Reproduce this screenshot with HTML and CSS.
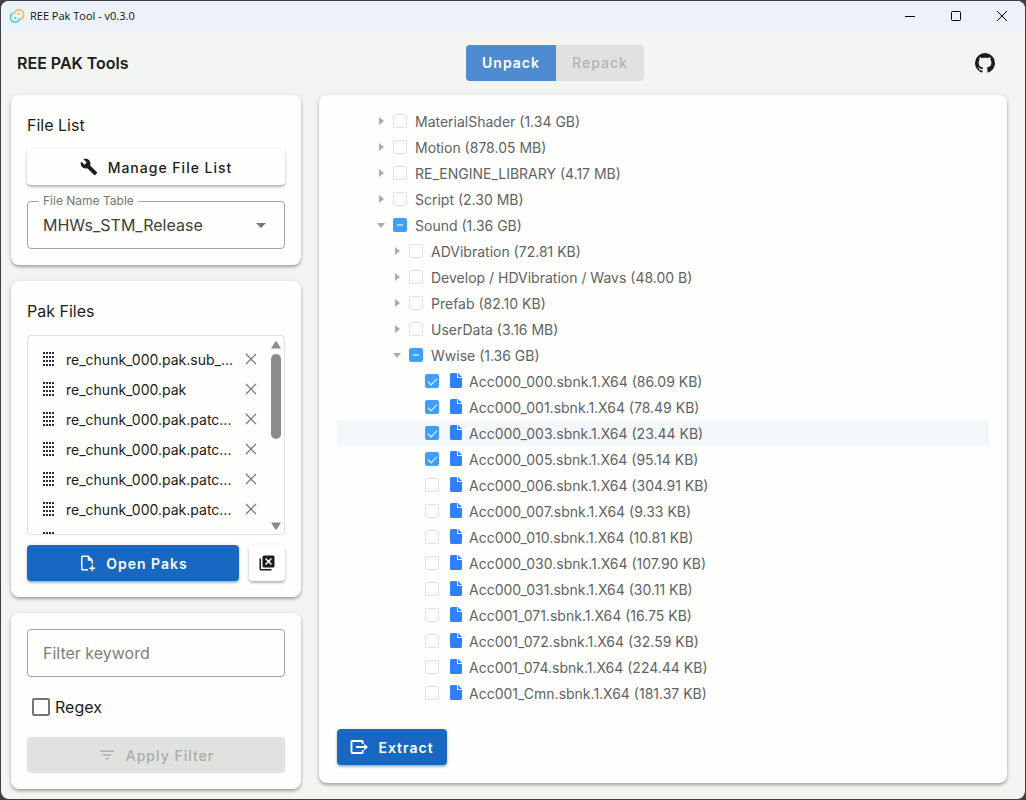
FILE: index.html
```
<!DOCTYPE html>
<html lang="en">
<head>
<meta charset="utf-8">
<meta name="viewport" content="width=device-width, initial-scale=1">
<title>REE Pak Tool - v0.3.0</title>
<link rel="stylesheet" href="styles.css">
</head>
<body>
<svg class="sprite" aria-hidden="true">
  <symbol id="i-drag" viewBox="0 0 12 14"><path d="M0 0h2v2H0zM3 0h2v2H3zM6 0h2v2H6zM9 0h2v2H9zM0 4h2v2H0zM3 4h2v2H3zM6 4h2v2H6zM9 4h2v2H9zM0 8h2v2H0zM3 8h2v2H3zM6 8h2v2H6zM9 8h2v2H9zM0 12h2v2H0zM3 12h2v2H3zM6 12h2v2H6zM9 12h2v2H9z"/></symbol>
  <symbol id="i-x" viewBox="0 0 12 12"><path d="M1 1l10 10M11 1L1 11" fill="none" stroke="currentColor" stroke-width="1.2"/></symbol>
  <symbol id="i-file" viewBox="0 0 18 18"><path d="M4.500 1H10v5h5v8.500q0 1.500-1.500 1.500h-9Q3 16 3 14.500v-12Q3 1 4.500 1z"/><path d="M11 1l4 4h-4z"/></symbol>
</svg>
<div class="window">
  <div class="titlebar">
    <svg class="app-logo" viewBox="0 0 24 24"><g fill="none" stroke-width="2.600"><path d="M8 8.500a7 7 0 1 1 9 8" stroke="#f5c060"/><path d="M16 15.500a7 7 0 1 1-9-8" stroke="#4cd0de"/></g><circle cx="14.500" cy="9" r="1.800" fill="#f5c060"/><circle cx="9.500" cy="15" r="1.800" fill="#4cd0de"/></svg>
    <span class="window-title">REE Pak Tool - v0.3.0</span>
    <button class="win-btn" aria-label="Minimize"><svg viewBox="0 0 10 10"><path d="M0 5.500h10"/></svg></button>
    <button class="win-btn" aria-label="Maximize"><svg viewBox="0 0 10 10"><rect x=".5" y=".5" width="9" height="9" rx="1"/></svg></button>
    <button class="win-btn" aria-label="Close"><svg viewBox="0 0 10 10"><path d="M0 0l10 10M10 0L0 10"/></svg></button>
  </div>
  <header class="header">
    <h1 class="brand">REE PAK Tools</h1>
    <div class="modes">
      <button class="mode mode-active">Unpack</button>
      <button class="mode mode-off" disabled>Repack</button>
    </div>
    <a class="github" href="#" aria-label="GitHub"><svg viewBox="2 2 20 20"><path d="M12,2A10,10 0 0,0 2,12C2,16.42 4.87,20.17 8.84,21.5C9.34,21.58 9.5,21.27 9.5,21C9.5,20.77 9.5,20.14 9.5,19.31C6.73,19.91 6.14,17.97 6.14,17.97C5.68,16.81 5.03,16.5 5.03,16.5C4.12,15.88 5.1,15.9 5.1,15.9C6.1,15.97 6.63,16.93 6.63,16.93C7.5,18.45 8.97,18 9.54,17.76C9.63,17.11 9.89,16.67 10.17,16.42C7.95,16.17 5.62,15.31 5.62,11.5C5.62,10.39 6,9.5 6.65,8.79C6.55,8.54 6.2,7.5 6.75,6.15C6.75,6.15 7.59,5.88 9.5,7.17C10.29,6.95 11.15,6.84 12,6.84C12.85,6.84 13.71,6.95 14.5,7.17C16.41,5.88 17.25,6.15 17.25,6.15C17.8,7.5 17.45,8.54 17.35,8.79C18,9.5 18.38,10.39 18.38,11.5C18.38,15.32 16.04,16.16 13.81,16.41C14.17,16.72 14.5,17.33 14.5,18.26C14.5,19.6 14.5,20.68 14.5,21C14.5,21.27 14.66,21.59 15.17,21.5C19.14,20.16 22,16.42 22,12A10,10 0 0,0 12,2Z"/></svg></a>
  </header>
  <main class="main">
    <aside class="side">
      <section class="card">
        <h2 class="card-title">File List</h2>
        <button class="btn btn-plain btn-wide"><svg class="icon" viewBox="0 0 24 24"><path d="M22.7,19L13.6,9.9C14.5,7.6 14,4.9 12.1,3C10.1,1 7.1,0.6 4.7,1.7L9,6L6,9L1.6,4.7C0.4,7.1 0.9,10.1 2.9,12.1C4.8,14 7.5,14.5 9.8,13.6L18.9,22.7C19.3,23.1 19.9,23.1 20.3,22.7L22.6,20.4C23.1,20 23.1,19.3 22.7,19Z"/></svg>Manage File List</button>
        <fieldset class="outlined">
          <legend><label for="table">File Name Table</label></legend>
          <select id="table"><option>MHWs_STM_Release</option></select>
          <svg class="drop" viewBox="0 0 10 5"><path d="M0 0h10L5 5z"/></svg>
        </fieldset>
      </section>
      <section class="card">
        <h2 class="card-title">Pak Files</h2>
        <div class="pak-box">
          <ul class="paks">
            <li><svg class="drag"><use href="#i-drag"/></svg><span>re_chunk_000.pak.sub_...</span><button aria-label="Remove"><svg><use href="#i-x"/></svg></button></li>
            <li><svg class="drag"><use href="#i-drag"/></svg><span>re_chunk_000.pak</span><button aria-label="Remove"><svg><use href="#i-x"/></svg></button></li>
            <li><svg class="drag"><use href="#i-drag"/></svg><span>re_chunk_000.pak.patc...</span><button aria-label="Remove"><svg><use href="#i-x"/></svg></button></li>
            <li><svg class="drag"><use href="#i-drag"/></svg><span>re_chunk_000.pak.patc...</span><button aria-label="Remove"><svg><use href="#i-x"/></svg></button></li>
            <li><svg class="drag"><use href="#i-drag"/></svg><span>re_chunk_000.pak.patc...</span><button aria-label="Remove"><svg><use href="#i-x"/></svg></button></li>
            <li><svg class="drag"><use href="#i-drag"/></svg><span>re_chunk_000.pak.patc...</span><button aria-label="Remove"><svg><use href="#i-x"/></svg></button></li>
            <li><svg class="drag"><use href="#i-drag"/></svg></li>
          </ul>
          <div class="scroll">
            <svg viewBox="0 0 10 8"><path d="M4 1q1-1.500 2 0l4 6.500H0z"/></svg>
            <div class="track"><div class="thumb"></div></div>
            <svg viewBox="0 0 10 8"><path d="M4 7q1 1.500 2 0l4-6.500H0z"/></svg>
          </div>
        </div>
        <div class="actions">
          <button class="btn btn-primary btn-grow"><svg class="icon" viewBox="0 0 24 24"><path d="M23 18H20V15H18V18H15V20H18V23H20V20H23M6 2C4.89 2 4 2.9 4 4V20C4 21.11 4.89 22 6 22H13.81C13.45 21.38 13.2 20.7 13.08 20H6V4H13V9H18V13.08C18.33 13.03 18.67 13 19 13C19.34 13 19.67 13.03 20 13.08V8L14 2Z"/></svg>Open Paks</button>
          <button class="btn btn-plain btn-square" aria-label="Close all"><svg class="icon" viewBox="0 0 24 24"><path d="M2 6h2v14h14v2H4q-2 0-2-2z"/><path fill-rule="evenodd" d="M8 2h12q2 0 2 2v12q0 2-2 2H8q-2 0-2-2V4q0-2 2-2zm1.400 4.800L12.600 10l-3.200 3.200 1.400 1.400L14 11.400l3.200 3.200 1.400-1.400L15.400 10l3.200-3.200-1.400-1.400L14 8.600l-3.200-3.200z"/></svg></button>
        </div>
      </section>
      <section class="card">
        <input class="filter" type="text" placeholder="Filter keyword" aria-label="Filter keyword">
        <label class="regex"><input type="checkbox">Regex</label>
        <button class="btn btn-disabled btn-wide" disabled><svg class="icon" viewBox="0 0 24 24"><path d="M6,13H18V11H6M3,6V8H21V6M10,18H14V16H10V18Z"/></svg>Apply Filter</button>
      </section>
    </aside>
    <section class="card content">
      <ul class="tree" id="tree"></ul>
      <div class="footer"><button class="btn btn-primary btn-extract"><svg class="icon" viewBox="0 0 24 24"><path d="M17 8V5q0-1-1-1H3Q2 4 2 5v14q0 1 1 1h13q1 0 1-1v-3M8 12h12" fill="none" stroke="currentColor" stroke-width="2.400"/><path d="M19 7.500l5 4.500-5 4.500z"/></svg>Extract</button></div>
    </section>
  </main>
</div>
<script src="tree.js"></script>
</body>
</html>
```
FILE: tree.js
```
// [level, kind, state, label]
const rows = [
  [2, "dir", "", "MaterialShader (1.34 GB)"],
  [2, "dir", "", "Motion (878.05 MB)"],
  [2, "dir", "", "RE_ENGINE_LIBRARY (4.17 MB)"],
  [2, "dir", "", "Script (2.30 MB)"],
  [2, "open", "mixed", "Sound (1.36 GB)"],
  [3, "dir", "", "ADVibration (72.81 KB)"],
  [3, "dir", "", "Develop / HDVibration / Wavs (48.00 B)"],
  [3, "dir", "", "Prefab (82.10 KB)"],
  [3, "dir", "", "UserData (3.16 MB)"],
  [3, "open", "mixed", "Wwise (1.36 GB)"],
  [4, "file", "on", "Acc000_000.sbnk.1.X64 (86.09 KB)"],
  [4, "file", "on", "Acc000_001.sbnk.1.X64 (78.49 KB)"],
  [4, "file", "on", "Acc000_003.sbnk.1.X64 (23.44 KB)", "hovered"],
  [4, "file", "on", "Acc000_005.sbnk.1.X64 (95.14 KB)"],
  [4, "file", "", "Acc000_006.sbnk.1.X64 (304.91 KB)"],
  [4, "file", "", "Acc000_007.sbnk.1.X64 (9.33 KB)"],
  [4, "file", "", "Acc000_010.sbnk.1.X64 (10.81 KB)"],
  [4, "file", "", "Acc000_030.sbnk.1.X64 (107.90 KB)"],
  [4, "file", "", "Acc000_031.sbnk.1.X64 (30.11 KB)"],
  [4, "file", "", "Acc001_071.sbnk.1.X64 (16.75 KB)"],
  [4, "file", "", "Acc001_072.sbnk.1.X64 (32.59 KB)"],
  [4, "file", "", "Acc001_074.sbnk.1.X64 (224.44 KB)"],
  [4, "file", "", "Acc001_Cmn.sbnk.1.X64 (181.37 KB)"]
];
const caret = '<svg viewBox="0 0 8 8"><path d="M2 0l5 4-5 4z"/></svg>';
document.getElementById("tree").innerHTML = rows.map(([level, kind, state, label, extra], i) => `
  <li class="row level-${level} ${extra || ""}">
    <span class="caret ${kind}">${kind === "file" ? "" : caret}</span>
    <input type="checkbox" id="n${i}" class="${state}" ${state === "on" ? "checked" : ""}>
    ${kind === "file" ? '<svg class="file-icon"><use href="#i-file"/></svg>' : ""}
    <label for="n${i}">${label}</label>
  </li>`).join("");
document.querySelectorAll("input.mixed").forEach(el => { el.indeterminate = true; });
```
FILE: styles.css
```
* { box-sizing: border-box; }
body { margin: 0; background: #3f4146; font-family: Inter, "Noto Sans", sans-serif; color: #1b1c1b; }
button, input, select { font: inherit; color: inherit; margin: 0; }
button { border: 0; background: none; padding: 0; }
ul { list-style: none; margin: 0; padding: 0; }
.sprite { display: none; }
svg { fill: currentColor; flex: none; display: block; }

.window { margin: 1px; min-height: calc(100vh - 2px); background: #f3f5f3; border-radius: 8px; overflow: hidden; }
.titlebar { display: flex; align-items: center; height: 31px; background: #edf2f8; padding: 0 0 2px 8px; }
.app-logo { width: 16px; height: 16px; }
.window-title { flex: 1; margin-left: 5px; font: 11px/16px "Open Sans", sans-serif; color: #111; }
.win-btn { width: 46px; height: 28px; display: flex; align-items: center; justify-content: center; }
.win-btn svg { width: 10px; height: 10px; fill: none; stroke: #000; overflow: visible; }

.header { display: flex; align-items: center; justify-content: space-between; height: 63px; padding: 0 30px 2px 16px; }
.brand { margin: 0; min-width: 118px; font-size: 16px; line-height: 24px; font-weight: 600; }
.modes { display: flex; border-radius: 4px; overflow: hidden; }
.mode { height: 36px; width: 90px; font-size: 14px; font-weight: 600; letter-spacing: 1px; }
.mode-active { background: #4e8bd1; color: #fff; }
.mode-off { width: 88px; background: #e0e2e0; color: #b0b3b0; font-weight: 500; }
.github svg { width: 20px; height: 20px; }
.github { color: #1b1c1b; }

.main { display: grid; grid-template-columns: 290px 1fr; gap: 18px; padding: 0 18px 10px 10px; }
.side { display: flex; flex-direction: column; gap: 16px; }
.card { background: #fefffc; border-radius: 8px; padding: 16px; box-shadow: 0 2px 3px rgba(0,0,0,.28), 0 1px 6px rgba(0,0,0,.1); }
.card-title { margin: 0 0 10px; font-size: 16px; line-height: 28px; font-weight: 400; }

.btn { display: flex; align-items: center; justify-content: center; gap: 10px; height: 36px; border-radius: 4px; font-size: 14px; font-weight: 500; letter-spacing: 1px; }
.icon { width: 18px; height: 18px; }
.btn-plain { background: #fefffc; box-shadow: 0 2px 2px rgba(0,0,0,.22), 0 1px 4px rgba(0,0,0,.12); }
.btn-primary { background: #1867c0; color: #fff; font-weight: 600; box-shadow: 0 2px 2px rgba(0,0,0,.22), 0 1px 4px rgba(0,0,0,.12); }
.btn-disabled { background: #e0e2e0; color: #a9aca9; }
.btn-wide { width: 100%; }
.btn-grow { flex: 1; }
.btn-square { width: 36px; }
.btn-extract { width: 110px; }
.actions { display: flex; gap: 10px; margin-top: 10px; }

.outlined { display: flex; align-items: center; height: 55px; margin: 9px 0 0; min-width: 0; padding: 0 18px 6px 11px; border: 1px solid #a2a5a2; border-radius: 4px; color: #3c3e3c; }
.outlined legend { padding: 0 4px; font-size: 12px; line-height: 14px; color: #747674; }
.outlined select { flex: 1; height: 34px; padding: 0 4px; border: 0; background: none; appearance: none; font-size: 16px; }
.drop { width: 10px; height: 5px; color: #747674; }

.pak-box { display: flex; height: 200px; border: 1px solid #dfe1e0; border-radius: 4px; overflow: hidden; }
.paks { flex: 1; min-width: 0; padding: 8px 0 0 15px; }
.paks li { display: flex; align-items: center; height: 30px; font-size: 14px; }
.paks span { flex: 1; min-width: 0; white-space: nowrap; overflow: hidden; }
.paks .drag { width: 12px; height: 14px; margin-right: 11px; color: #2a2740; }
.paks button { display: flex; margin: 0 11px 0 6px; color: #747674; }
.paks button svg { width: 12px; height: 12px; }
.scroll { display: flex; flex-direction: column; width: 16px; padding: 5px 3px 4px; color: #8a8d8a; }
.scroll svg { width: 10px; height: 8px; }
.track { flex: 1; margin: 5px 0; }
.thumb { height: 52%; border-radius: 5px; background: #8a8d8a; }

.filter { display: block; width: 100%; height: 48px; padding: 0 15px; border: 1px solid #a2a5a2; border-radius: 4px; background: none; font-size: 16px; }
.filter::placeholder { color: #7c7e7c; opacity: 1; }
.regex { display: flex; align-items: center; gap: 5px; height: 40px; margin: 10px 0; padding-left: 5px; font-size: 16px; }
.regex input { appearance: none; width: 18px; height: 18px; border: 2px solid #747674; border-radius: 2px; }

.content { align-self: start; padding: 13px 18px 18px; }
.row { display: flex; align-items: center; height: 26px; font-size: 14px; color: #606266; white-space: nowrap; }
.level-2 { padding-left: 32px; }
.level-3 { padding-left: 48px; }
.level-4 { padding-left: 64px; }
.hovered { background: #f4f7f9; }
.caret { display: flex; justify-content: center; width: 24px; color: #a8abb2; }
.caret svg { width: 8px; height: 8px; }
.caret.open svg { transform: rotate(90deg); }
.row input { appearance: none; display: grid; place-items: center; width: 14px; height: 14px; border: 1px solid #dfe1e4; border-radius: 2px; }
.row label { margin-left: 8px; }
.row input.on, .row input.mixed { background: #409eff; border-color: #409eff; }
.row input.mixed::after { content: ""; width: 6px; height: 2px; background: #a8d2ff; }
.row input.on::after { content: ""; width: 4px; height: 8px; margin-bottom: 2px; border: solid #fff; border-width: 0 1px 1px 0; transform: rotate(45deg); }
.file-icon { width: 18px; height: 18px; margin-left: 8px; color: #2f80ff; }
.file-icon + label { margin-left: 4px; }
.footer { margin-top: 23px; }
```
